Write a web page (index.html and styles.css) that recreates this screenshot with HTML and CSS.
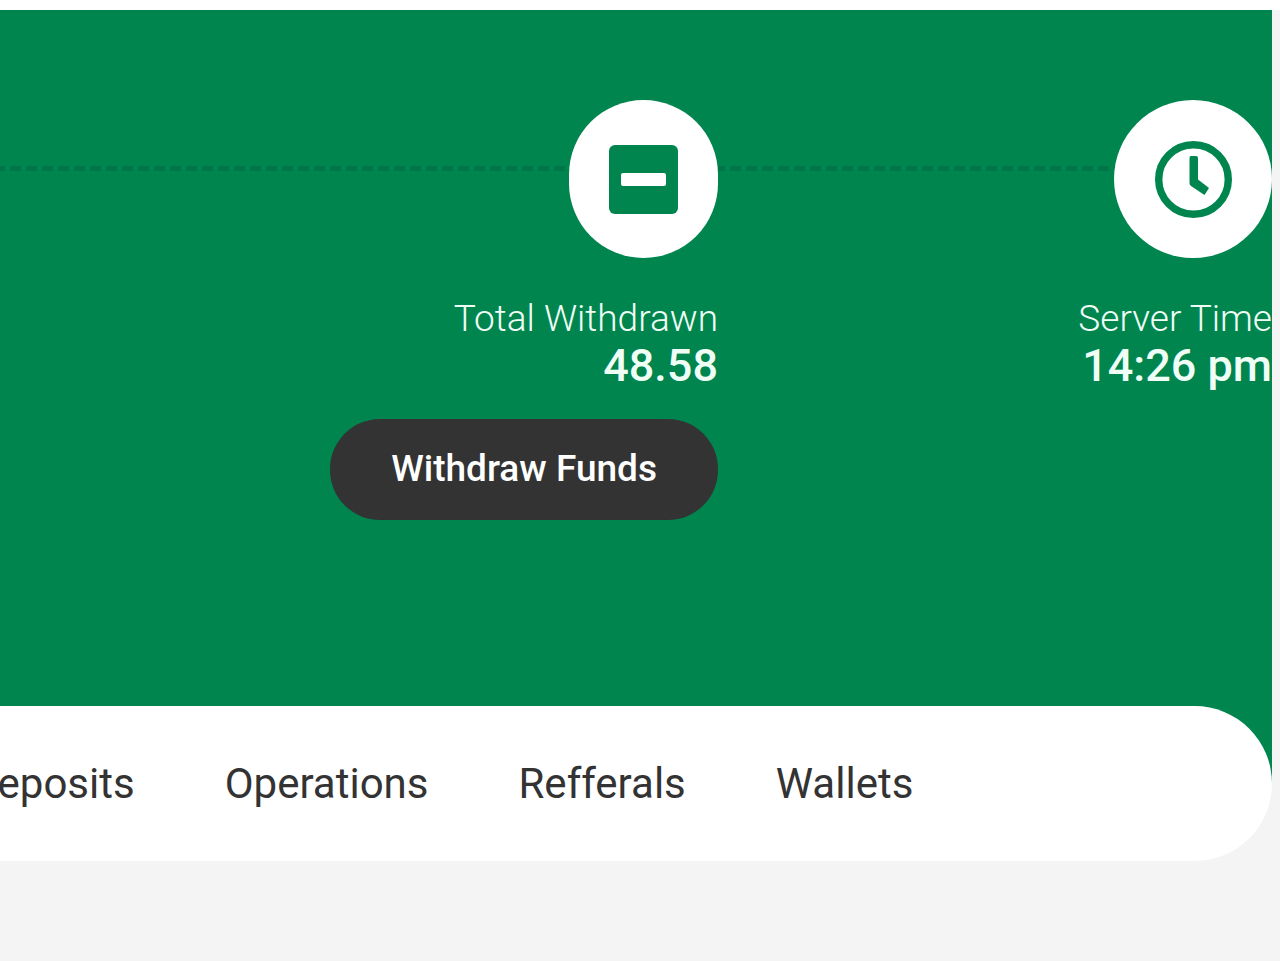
FILE: index.html
```
<!DOCTYPE html>
<html lang="en">
<head>
    <meta charset="UTF-8">
    <meta name="viewport" content="width=device-width, initial-scale=1.0">
    <title>Account</title>
    <link rel="stylesheet" href="styles.css">
</head>
<body>

    <main class="account">

        <section class="stats">
            <div class="stat">
                <div class="stat-icon narrow">
                    <svg width="69" height="69" viewBox="0 0 69 69" aria-hidden="true">
                        <rect width="69" height="69" rx="6" fill="#00854f"/>
                        <rect x="12" y="28" width="45" height="13" rx="2" fill="#fff"/>
                    </svg>
                </div>
                <div class="label">Total Withdrawn</div>
                <div class="value">48.58</div>
                <button type="button" class="withdraw">Withdraw Funds</button>
            </div>

            <div class="stat">
                <div class="stat-icon">
                    <svg width="77" height="77" viewBox="0 0 77 77" aria-hidden="true">
                        <circle cx="38.5" cy="38.5" r="34.8" fill="none" stroke="#00854f" stroke-width="7.4"/>
                        <path d="M36 15h5q2 0 2 2v21.500l11 8.500-4.500 7L36 45q-1.500-1-1.500-3V17q0-2 1.500-2z" fill="#00854f"/>
                    </svg>
                </div>
                <div class="label">Server Time</div>
                <div class="value">14:26 pm</div>
            </div>
        </section>

        <nav class="menu">
            <a href="#">Deposits</a>
            <a href="#">Operations</a>
            <a href="#">Refferals</a>
            <a href="#">Wallets</a>
        </nav>

    </main>

</body>
</html>
```

FILE: styles.css
```
body{
    margin: 0;
    background-color: #f4f4f4;
    border-top: 10px solid #fff;
    font-family: Roboto, sans-serif;
    color: #333;
}

.account{
    margin-right: 8px;
    overflow: hidden;
}

.stats{
    display: grid;
    grid-template-columns: 1fr 554px;
    padding: 90px 0 264px;
    background-color: #00854f;
    /* dashed line that runs behind the icons */
    background-image: repeating-linear-gradient(90deg, #007548 0, #007548 5px, transparent 5px, transparent 10px, #007548 10px, #007548 16px);
    background-size: 100% 5px;
    background-position: 0 156px;
    background-repeat: no-repeat;
}

.stat{
    display: flex;
    flex-direction: column;
    align-items: flex-end;
    color: #f0fff6;
}

.stat-icon{
    display: flex;
    align-items: center;
    justify-content: center;
    width: 158px;
    height: 158px;
    margin-bottom: 39px;
    border-radius: 80px;
    background-color: #fff;
}

.stat-icon.narrow{
    width: 149px;
}

.label{
    font-size: 37px;
    font-weight: 300;
    line-height: 44px;
}

.value{
    font-size: 45px;
    font-weight: 500;
    line-height: 50px;
}

.withdraw{
    margin-top: 28px;
    padding: 28px 61px 29px;
    border: none;
    border-radius: 50px;
    background-color: #333;
    color: #fff;
    font-family: inherit;
    font-size: 37px;
    font-weight: 500;
    line-height: 44px;
    cursor: pointer;
}

.menu{
    display: flex;
    gap: 90px;
    /* pulled up over the green block */
    margin-top: -78px;
    margin-left: -90px;
    padding: 53px 60px 52px;
    border-radius: 78px;
    background-color: #fff;
    position: relative;
}

.menu a{
    color: #333;
    font-size: 42px;
    line-height: 50px;
    text-decoration: none;
}
```
